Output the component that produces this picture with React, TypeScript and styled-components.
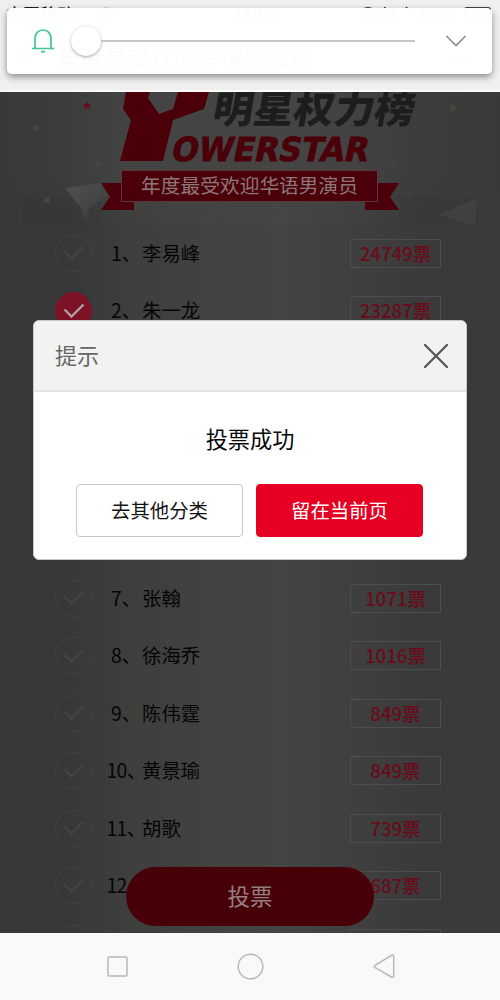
import React from "react";
import styled, { createGlobalStyle, css } from "styled-components";

const Global = createGlobalStyle`
  *, *::before, *::after { box-sizing: border-box; }
  body { margin: 0; font-family: "Noto Sans", "Noto Sans CJK SC", sans-serif; }
  button { font-family: inherit; padding: 0; cursor: pointer; }
`;

const cjk = `"Noto Sans CJK SC", "Noto Sans", sans-serif`;

const Screen = styled.div`
  position: relative;
  display: flex;
  flex-direction: column;
  width: 500px;
  height: 1000px;
  overflow: hidden;
  background: #f9f9f9;
  font-family: ${cjk};
`;

const Header = styled.header`
  flex: none;
  height: 92px;
  background: #f0f0f0;
  border-bottom: 2px solid #fafafa;
  color: #222;
`;

const StatusBar = styled.div`
  display: flex;
  align-items: center;
  height: 28px;
  padding: 0 9px 0 6px;
  font-size: 17px;
  font-weight: 500;
  line-height: 20px;
`;

const Carrier = styled.span`
  width: 88px;
  white-space: pre;
`;

const Clock = styled.span`
  flex: 1;
  margin-left: 115px;
`;

const Battery = styled.span`
  width: 27px;
  height: 15px;
  margin-left: 9px;
  border: 2px solid #444;
  border-radius: 3px;
`;

const TitleBar = styled.div`
  display: flex;
  align-items: center;
  gap: 22px;
  height: 60px;
  padding: 0 27px 0 19px;
  font-size: 23.3px;
`;

const PageTitle = styled.span`
  flex: 1;
`;

const VolumePanel = styled.div`
  position: absolute;
  left: 7px;
  top: 8px;
  z-index: 3;
  display: flex;
  align-items: center;
  width: 485px;
  height: 66px;
  padding: 0 25px 0 24px;
  border-radius: 5px;
  background: rgba(255, 255, 255, 0.985);
  box-shadow: 0 3px 7px rgba(0, 0, 0, 0.42);
`;

const Slider = styled.div`
  display: flex;
  align-items: center;
  width: 344px;
  margin-left: 16px;
`;

const Thumb = styled.span`
  flex: none;
  width: 30px;
  height: 30px;
  border-radius: 50%;
  background: #fff;
  box-shadow: 0 1px 3px rgba(0, 0, 0, 0.36);
`;

const Track = styled.span`
  flex: 1;
  height: 2px;
  background: #c6c6c6;
`;

const Chevron = styled.svg`
  margin-left: auto;
`;

const Main = styled.main`
  position: relative;
  height: 841px;
  overflow: hidden;
  background: linear-gradient(90deg, #37393b 0, #38393b 14%, #40403f 28%, #454443 42%, #474542 50%, #464646 56%, #424242 68%, #3b3b3b 84%, #3a3a3a 100%);
`;

const Banner = styled.svg`
  display: block;
`;

const Votes = styled.section`
  height: 720px;
  margin: 0 22px;
  background: rgba(0, 0, 0, 0.015);
`;

const Group = styled.div<{ $gap?: number }>`
  padding-top: ${(p) => p.$gap ?? 0}px;
`;

const Row = styled.div`
  display: flex;
  align-items: center;
  height: 57.5px;
  padding: 0 37px 1px 33px;
  color: #050505;
  font-size: 19.4px;
  line-height: 28px;
`;

const Check = styled.span<{ $on?: boolean }>`
  display: flex;
  align-items: center;
  justify-content: center;
  flex: none;
  width: 37px;
  height: 37px;
  border: 1px solid #404243;
  border-radius: 50%;
  color: #434444;
  ${(p) =>
    p.$on &&
    css`
      border-color: #7d1125;
      background: #7d1125;
      color: #aaa0a0;
    `}
`;

const Rank = styled.span<{ $tight?: boolean }>`
  display: flex;
  justify-content: center;
  width: 30px;
  margin-left: 19px;
  padding-bottom: 1px;
  letter-spacing: ${(p) => (p.$tight ? "-0.6px" : "0")};
  white-space: nowrap;
`;

const Name = styled.span`
  flex: 1;
  margin-left: 1px;
  padding-bottom: 1px;
`;

const Count = styled.span`
  width: 91px;
  height: 29px;
  border: 1px solid #4c4d4d;
  color: #6a0b1a;
  font-size: 18.6px;
  font-weight: 500;
  line-height: 25px;
  text-align: center;
`;

const VoteButton = styled.button`
  position: absolute;
  left: 126px;
  top: 775px;
  width: 248px;
  height: 59px;
  padding-bottom: 4px;
  border: 0;
  border-radius: 30px;
  background: #480008;
  color: #948083;
  font-size: 22.5px;
`;

const Dialog = styled.div`
  position: absolute;
  left: 33px;
  top: 320px;
  z-index: 2;
  width: 434px;
  height: 240px;
  overflow: hidden;
  border: 1px solid #c9c9c9;
  border-radius: 6px;
  background: #fff;
`;

const DialogHead = styled.div`
  display: flex;
  align-items: center;
  justify-content: space-between;
  height: 71px;
  padding: 0 17px 0 21px;
  border-bottom: 2px solid #e4e4e4;
  background: #f2f2f2;
  color: #666;
  font-size: 22px;
`;

const DialogTitle = styled.span`
  padding-bottom: 3px;
`;

const Message = styled.p`
  margin: 29px 0 29px;
  color: #080808;
  font-size: 22.2px;
  line-height: 34px;
  text-align: center;
`;

const Actions = styled.div`
  display: flex;
  justify-content: center;
  gap: 13px;
  padding-right: 1px;
`;

const Action = styled.button<{ $primary?: boolean }>`
  width: 167px;
  height: 53px;
  padding-bottom: 2px;
  border: 1px solid ${(p) => (p.$primary ? "#e60021" : "#c8c8c8")};
  border-radius: 4px;
  background: ${(p) => (p.$primary ? "#e60021" : "#fff")};
  color: ${(p) => (p.$primary ? "#fff" : "#141414")};
  font-size: 19.4px;
`;

const NavBar = styled.nav`
  display: flex;
  align-items: center;
  justify-content: space-between;
  height: 67px;
  padding: 0 105px 0 107px;
  background: #f9f9f9;
`;

const leaders = [
  { rank: 1, name: "李易峰", votes: 24749 },
  { rank: 2, name: "朱一龙", votes: 23287, voted: true },
];

const others = [
  { rank: 7, name: "张翰", votes: 1071 },
  { rank: 8, name: "徐海乔", votes: 1016 },
  { rank: 9, name: "陈伟霆", votes: 849 },
  { rank: 10, name: "黄景瑜", votes: 849 },
  { rank: 11, name: "胡歌", votes: 739 },
  { rank: 12, votes: 687 },
  {},
];

type Candidate = { rank?: number; name?: string; votes?: number; voted?: boolean };

const CandidateRow = ({ rank, name, votes, voted }: Candidate) => (
  <Row>
    <Check $on={voted}>
      <svg width="22" height="16" viewBox="0 0 22 16" fill="none" stroke="currentColor" strokeWidth="2.4">
        <path d="M1.5 6.5 8.5 13.5 20.5 1.5" />
      </svg>
    </Check>
    <Rank $tight={!!rank && rank > 9}>{rank && `${rank}、`}</Rank>
    <Name>{name}</Name>
    <Count>{votes && `${votes}票`}</Count>
  </Row>
);

const BannerArt = () => (
  <Banner width="500" height="133" viewBox="0 92 500 133">
    <defs>
      <linearGradient id="paper" x1="0" y1="0" x2="1" y2="1">
        <stop offset="0" stopColor="#505151" />
        <stop offset="1" stopColor="#3a3b3c" />
      </linearGradient>
      <linearGradient id="glow" x1="0" y1="0" x2="1" y2="0">
        <stop offset="0" stopColor="#454545" stopOpacity="0" />
        <stop offset=".3" stopColor="#454545" stopOpacity=".8" />
        <stop offset="1" stopColor="#454545" stopOpacity="0" />
      </linearGradient>
      <linearGradient id="fade" x1="0" y1="0" x2="0" y2="1">
        <stop offset="0" stopColor="#fff" />
        <stop offset=".6" stopColor="#fff" />
        <stop offset="1" stopColor="#000" />
      </linearGradient>
      <mask id="glowMask">
        <path d="M0 92H500V225H0Z" fill="url(#fade)" />
      </mask>
    </defs>
    <path d="M0 92H500V225H0Z" fill="url(#glow)" mask="url(#glowMask)" />
    <path d="M22 197H101V225H22ZM399 197H478V225H399Z" fill="#000" opacity=".03" />
    <path d="M65 188 101 183 108 195 90 207 86 220 80 207Z" fill="url(#paper)" />
    <path d="M438 215 477 198 475 232 463 222Z" fill="#3e4042" />
    <path d="m87 101 1.3 3.2 3.4.2-2.6 2.1.9 3.4-3-1.9-3 1.9.9-3.4-2.6-2.1 3.4-.2Z" fill="#65101c" />
    <g fill="#48453a">
      <circle cx="36" cy="128" r="3" />
      <circle cx="98" cy="164" r="2.5" />
      <circle cx="47" cy="200" r="3" />
      <circle cx="453" cy="108" r="3" />
      <circle cx="393" cy="163" r="2" />
      <circle cx="409" cy="194" r="1.5" />
    </g>
    <path
      d="M126 92 123 109 131 120 120 161H163L173 120 204 109 209 92H178L173 109 159 114 148 98 150 92Z"
      fill="#4b0009"
    />
    <text transform="translate(211 123) skewX(-10) scale(1 .95)" fontFamily={cjk} fontSize="40" fontWeight="900" textLength="202" lengthAdjust="spacingAndGlyphs" fill="#1d1d1d">
      明星权力榜
    </text>
    <text transform="translate(170 160.500) skewX(-12)" fontFamily="'DejaVu Sans Condensed', 'DejaVu Sans', sans-serif" fontSize="33" fontWeight="700" textLength="197" lengthAdjust="spacingAndGlyphs" fill="#4b0009" stroke="#4b0009" strokeWidth=".8">
      OWERSTAR
    </text>
    <path d="M101 183H121V202H134V210H101L110 197ZM378 183H399L390 197 399 210H365V202H378Z" fill="#4b0009" />
    <path d="M121.500 170.500H377.500V201.500H121.500Z" fill="#4b0009" stroke="#5a383b" />
    <text x="141" y="192.500" fontFamily={cjk} fontSize="19.700" textLength="217" fill="#8c7779">
      年度最受欢迎华语男演员
    </text>
  </Banner>
);

export default function App() {
  return (
    <Screen>
      <Global />
      <Header>
        <StatusBar>
          <Carrier>中国移动</Carrier>
          <svg width="24" height="17" viewBox="0 0 24 17" fill="none" stroke="#333" strokeWidth="2.500">
            <path d="M4 7Q12 -1 20 7M8 11q4-4 8 0" />
          </svg>
          <Clock>11:00</Clock>
          <svg width="16" height="16" viewBox="0 0 16 16" fill="none" stroke="#555" strokeWidth="1.600">
            <circle cx="8" cy="8" r="6.500" />
          </svg>
          <svg width="44" height="16" viewBox="0 0 44 16" fill="none" stroke="#444" strokeWidth="2">
            <path d="M9 1 5 15M13 2v12M17 2v12M30 1l4 5 4-2" />
          </svg>
          <span>85%</span>
          <Battery />
        </StatusBar>
        <TitleBar>
          <svg width="16" height="16" viewBox="0 0 16 16" stroke="#333" strokeWidth="1.500">
            <path d="m1 1 14 14M15 1 1 15" />
          </svg>
          <PageTitle>年度最受欢迎华语男演员</PageTitle>
          <svg width="24" height="4" viewBox="0 0 24 4" fill="#333">
            <circle cx="2" cy="2" r="1.500" />
            <circle cx="12" cy="2" r="1.500" />
            <circle cx="22" cy="2" r="1.500" />
          </svg>
        </TitleBar>
      </Header>

      <VolumePanel>
        <svg width="24" height="26" viewBox="0 0 24 26" fill="none" stroke="#3fc596" strokeWidth="1.700">
          <path d="M1 20.500H23M4 20.500V10.500C4 5.500 7.200 2 12 2s8 3.500 8 8.500v10M10 23.700h4" />
        </svg>
        <Slider>
          <Thumb />
          <Track />
        </Slider>
        <Chevron width="22" height="14" viewBox="0 0 22 14" fill="none" stroke="#8c8c8c" strokeWidth="1.600">
          <path d="m1.500 2 9.500 9.500L20.500 2" />
        </Chevron>
      </VolumePanel>

      <Main>
        <BannerArt />
        <Votes>
          <Group>
            {leaders.map((c) => (
              <CandidateRow key={c.rank} {...c} />
            ))}
          </Group>
          <Group $gap={230}>
            {others.map((c, i) => (
              <CandidateRow key={i} {...c} />
            ))}
          </Group>
        </Votes>
        <VoteButton>投票</VoteButton>
      </Main>

      <Dialog>
        <DialogHead>
          <DialogTitle>提示</DialogTitle>
          <svg width="26" height="26" viewBox="0 0 26 26" stroke="#555" strokeWidth="2.200" strokeLinecap="round">
            <path d="m2 2 22 22M24 2 2 24" />
          </svg>
        </DialogHead>
        <Message>投票成功</Message>
        <Actions>
          <Action>去其他分类</Action>
          <Action $primary>留在当前页</Action>
        </Actions>
      </Dialog>

      <NavBar>
        <svg width="21" height="21" viewBox="0 0 21 21" fill="none" stroke="#b8b8b8" strokeWidth="1.500">
          <rect x="1" y="1" width="19" height="19" rx="1.500" />
        </svg>
        <svg width="27" height="27" viewBox="0 0 27 27" fill="none" stroke="#b8b8b8" strokeWidth="1.500">
          <circle cx="13.500" cy="13.500" r="12.300" />
        </svg>
        <svg width="22" height="25" viewBox="0 0 22 25" fill="none" stroke="#b8b8b8" strokeWidth="1.500" strokeLinejoin="round">
          <path d="M1.800 11.500 18.500 1.300Q20.700.500 20.700 2.500V22Q20.700 24 18.500 23L1.800 13.300Q.5 12.400 1.800 11.500Z" />
        </svg>
      </NavBar>
    </Screen>
  );
}
